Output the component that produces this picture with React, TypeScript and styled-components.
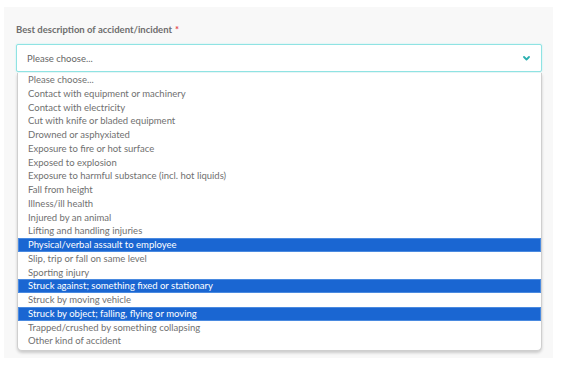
import { createGlobalStyle, styled } from "styled-components";

const GlobalStyle = createGlobalStyle`
    html, body {
        margin: 0;
        padding: 0;
        background: #ffffff;
    }
    body {
        font-family: "Lato", "Noto Sans", sans-serif;
    }
`;

const Page = styled.div`
    width: 565px;
    height: 376px;
    padding: 7px 12px 0 4px;
    box-sizing: border-box;
`;

const Panel = styled.div`
    background: #f8f8f8;
    padding: 16px 11px 8px 12px;
    box-sizing: border-box;
    height: 351px;
`;

const Label = styled.div`
    font-size: 9.5px;
    font-weight: 700;
    color: #6e6e6e;
    line-height: 14px;
    margin-bottom: 7px;
`;

const Required = styled.span`
    color: #e5484d;
    margin-left: 3px;
`;

const SelectBox = styled.div`
    height: 28px;
    box-sizing: border-box;
    background: #ffffff;
    border: 1px solid #8fe3e3;
    border-radius: 2px;
    box-shadow: 0 0 2px #b8eeee;
    display: flex;
    align-items: center;
    justify-content: space-between;
    padding: 0 11px 0 10px;
    font-size: 9.5px;
    color: #666;
`;

const Chevron = styled.svg`
    width: 7px;
    height: 5px;
`;

const Dropdown = styled.ul`
    list-style: none;
    margin: 1px 0 0 1px;
    padding: 0 0 2px;
    background: #ffffff;
    border: 1px solid #cfcfcf;
    border-top: none;
    border-radius: 0 0 5px 5px;
    box-shadow: 0 2px 3px rgba(0, 0, 0, 0.18);
`;

const Option = styled.li<{ $selected?: boolean }>`
    height: 13.75px;
    line-height: 13.75px;
    padding-left: 10px;
    font-size: 9.5px;
    white-space: nowrap;
    color: ${(p) => (p.$selected ? "#ffffff" : "#707070")};
    background: ${(p) => (p.$selected ? "#1a66d2" : "transparent")};
    box-shadow: ${(p) => (p.$selected ? "inset 0 0 0 1px #4a8ae0" : "none")};
`;

const options = [
    "Please choose...",
    "Contact with equipment or machinery",
    "Contact with electricity",
    "Cut with knife or bladed equipment",
    "Drowned or asphyxiated",
    "Exposure to fire or hot surface",
    "Exposed to explosion",
    "Exposure to harmful substance (incl. hot liquids)",
    "Fall from height",
    "Illness/ill health",
    "Injured by an animal",
    "Lifting and handling injuries",
    "Physical/verbal assault to employee",
    "Slip, trip or fall on same level",
    "Sporting injury",
    "Struck against; something fixed or stationary",
    "Struck by moving vehicle",
    "Struck by object; falling, flying or moving",
    "Trapped/crushed by something collapsing",
    "Other kind of accident",
];

const selected = new Set([12, 15, 17]);

const App: React.FC = () => {
    return (
        <>
            <GlobalStyle />
            <Page>
                <Panel>
                    <Label>
                        Best description of accident/incident<Required>*</Required>
                    </Label>
                    <SelectBox>
                        <span>Please choose...</span>
                        <Chevron viewBox="0 0 7 5">
                            <path d="M1 1 L3.5 3.5 L6 1" fill="none" stroke="#2ab0b0" strokeWidth="1.8" strokeLinecap="round" strokeLinejoin="round" />
                        </Chevron>
                    </SelectBox>
                    <Dropdown>
                        {options.map((o, i) => (
                            <Option key={o} $selected={selected.has(i)}>{o}</Option>
                        ))}
                    </Dropdown>
                </Panel>
            </Page>
        </>
    );
};

export default App;
